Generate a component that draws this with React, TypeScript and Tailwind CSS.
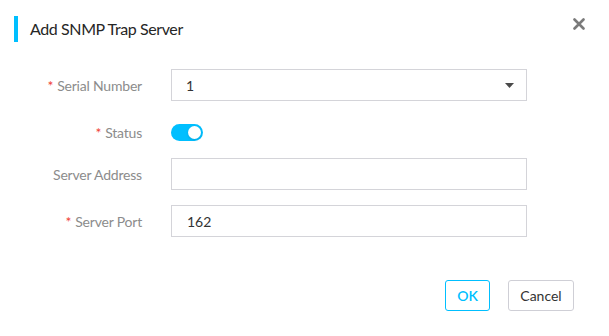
import { useState } from "react";

function Label({ text, required }: { text: string; required?: boolean }) {
  return (
    <div className="w-[142px] shrink-0 text-right text-[14px] tracking-[-0.2px] text-[#8c8c8c]">
      {required && <span className="mr-1 text-[#f04134]">*</span>}
      {text}
    </div>
  );
}

export default function App() {
  const [on, setOn] = useState(true);

  return (
    <div className="relative h-[336px] w-[609px] bg-white font-['Lato','Liberation_Sans',sans-serif] text-[#333]">
      {/* header */}
      <div className="flex items-center pt-[16px] pl-[14px] pr-[24px]">
        <div className="h-[26px] w-[4px] bg-[#00bfff]" />
        <div className="ml-[12px] text-[16px] tracking-[-0.4px] text-[#262626]">Add SNMP Trap Server</div>
        <button className="ml-auto -mt-[10px] text-[#7a7a7a]">
          <svg width="12" height="12" viewBox="0 0 12 12">
            <path d="M1.5 1.5 L10.5 10.5 M10.5 1.5 L1.5 10.5" stroke="currentColor" strokeWidth="2.6" strokeLinecap="round" />
          </svg>
        </button>
      </div>

      {/* form */}
      <div className="mt-[27px] flex flex-col">
        <div className="mb-[15px] flex items-center">
          <Label text="Serial Number" required />
          <div className="ml-[29px] flex h-[32px] w-[356px] items-center justify-between border border-[#d4d4d9] pl-[14px] pr-[12px] text-[14px]">
            <span>1</span>
            <svg width="9" height="5" viewBox="0 0 9 5">
              <path d="M0 0 H9 L4.5 5 Z" fill="#4a4a4a" />
            </svg>
          </div>
        </div>

        <div className="mb-[10px] flex h-[32px] items-center">
          <Label text="Status" required />
          <button
            onClick={() => setOn(!on)}
            className={`ml-[29px] flex h-[17px] w-[32px] items-center rounded-full px-[2px] ${on ? "justify-end bg-[#00bfff]" : "justify-start bg-[#ccc]"}`}
          >
            <span className="h-[13px] w-[13px] rounded-full bg-white shadow-sm" />
          </button>
        </div>

        <div className="mb-[15px] flex items-center">
          <Label text="Server Address" />
          <input className="ml-[29px] h-[32px] w-[356px] border border-[#d4d4d9] px-[14px] text-[14px] outline-none" />
        </div>

        <div className="flex items-center">
          <Label text="Server Port" required />
          <input
            defaultValue="162"
            className="ml-[29px] h-[32px] w-[356px] border border-[#d4d4d9] px-[15px] text-[14px] outline-none"
          />
        </div>
      </div>

      {/* footer */}
      <div className="mt-[43px] flex justify-end gap-[18px] pr-[35px]">
        <button className="h-[31px] w-[45px] rounded-[3px] border border-[#00bfff] text-[14px] font-semibold text-[#00bfff]">
          OK
        </button>
        <button className="h-[31px] w-[66px] rounded-[3px] border border-[#cfcfd6] text-[14px] text-[#333]">
          Cancel
        </button>
      </div>
    </div>
  );
}
